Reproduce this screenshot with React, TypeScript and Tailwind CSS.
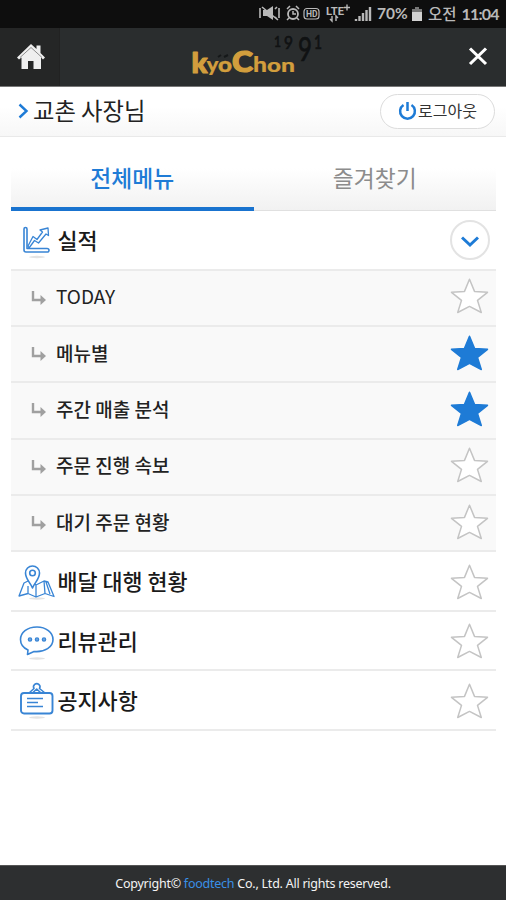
import type { ReactNode } from "react";
import clsx from "clsx";

const subMenus = [
  { label: "TODAY", starred: false },
  { label: "메뉴별", starred: true },
  { label: "주간 매출 분석", starred: true },
  { label: "주문 진행 속보", starred: false },
  { label: "대기 주문 현황", starred: false },
];

function Star({ filled = false, className }: { filled?: boolean; className?: string }) {
  return (
    <svg
      width="40"
      height="38"
      viewBox="0 0 40 38"
      className={clsx(
        "shrink-0",
        filled ? "fill-[#1e7bd6] stroke-[#1e7bd6]" : "fill-white stroke-[#c4c4c4]",
        className,
      )}
      strokeWidth="1.5"
      strokeLinejoin="round"
    >
      <path d="M19.5 2.2 24.5 14.4 37.5 15.3 27.5 23.4 31.3 35.5 19.5 29.4 7.7 35.5 11.5 23.4 1.5 15.3 14.5 14.4Z" />
    </svg>
  );
}

function StatusBar() {
  return (
    <div className="flex h-7 items-center bg-[#0e0e0e] pl-[258px] text-[#b9b9b9]">
      <svg width="115" height="24" viewBox="0 0 115 24" className="shrink-0 fill-none stroke-current">
        <path d="M5 8H9L15 4V18L9 14H5Z" className="fill-current" stroke="none" />
        <path d="M4 5 20 18M2 6V16M17 7 19 5M17 15 19 17M21 6V16" strokeWidth="1.6" />
        <circle cx="35" cy="12" r="5" strokeWidth="1.8" />
        <path d="M35 9V12H38M29 7 32 4M38 4 41 7M31 16 29 18M39 16 41 18" strokeWidth="1.5" />
        <rect x="46" y="6.5" width="15" height="10.5" rx="3" strokeWidth="1.2" />
        <text x="48" y="15" fontSize="8.5" fontWeight="700" textLength="11.5" lengthAdjust="spacingAndGlyphs" className="fill-current font-['Roboto']" stroke="none">HD</text>
        <text x="68" y="12.5" fontSize="11" fontWeight="700" textLength="18" lengthAdjust="spacingAndGlyphs" className="fill-current font-['Roboto']" stroke="none">LTE</text>
        <path d="M86 5.5H92M89 2.5V8.5M74 14V19L72 17M78 19V14L80 16" strokeWidth="1.4" />
        <path d="M98 19V17M101.5 19V14M105 19V11M108.5 19V8M112 19V5" strokeWidth="2.4" />
      </svg>
      <span className="ml-[4px] w-[32px] whitespace-nowrap font-['Lato'] text-[15.5px] font-bold leading-none">
        70%
      </span>
      <svg width="12" height="16" viewBox="0 0 12 16" className="ml-[2px] shrink-0">
        <path d="M4 1H8V3H11V15H1V3H4Z" fill="#777" />
        <path d="M1 6H11V15H1Z" fill="#d2d2d2" />
      </svg>
      <span className="ml-[5px] whitespace-nowrap font-['Noto_Sans_CJK_KR',sans-serif] text-[15.5px] font-medium leading-none">
        오전
      </span>
      <span className="ml-[5px] whitespace-nowrap font-['Lato'] text-[16px] font-bold leading-none tracking-[-0.8px]">
        11:04
      </span>
    </div>
  );
}

function Logo() {
  return (
    <svg width="140" height="58" viewBox="0 0 140 58" className="shrink-0 font-['Lato',sans-serif]">
      <g fill="#101213" stroke="#101213" strokeWidth="0.7">
        <text x="83" y="19" fontSize="15" textLength="7" lengthAdjust="spacingAndGlyphs">1</text>
        <text x="93" y="21" fontSize="17" textLength="9" lengthAdjust="spacingAndGlyphs">9</text>
        <text x="107" y="33" fontSize="32" textLength="14" lengthAdjust="spacingAndGlyphs">9</text>
        <text x="123" y="21" fontSize="19" textLength="8" lengthAdjust="spacingAndGlyphs">1</text>
      </g>
      <path d="M27 29 30 27M33 29 37 27" stroke="#151819" strokeWidth="2" />
      <g fill="#d29e3d" stroke="#d29e3d" strokeWidth="1.2" strokeLinejoin="round" fontWeight="900">
        <text x="0.5" y="45" fontSize="29" textLength="16" lengthAdjust="spacingAndGlyphs">k</text>
        <text x="15.5" y="43.5" fontSize="21" strokeWidth="0.2" textLength="12" lengthAdjust="spacingAndGlyphs">y</text>
        <text x="27" y="43.5" fontSize="20" strokeWidth="0.4" textLength="14" lengthAdjust="spacingAndGlyphs">o</text>
        <text x="41" y="43.5" fontSize="28" textLength="21" lengthAdjust="spacingAndGlyphs">C</text>
        <text x="62" y="44" fontSize="21" strokeWidth="0.2" textLength="14" lengthAdjust="spacingAndGlyphs">h</text>
        <text x="76" y="44" fontSize="18" strokeWidth="0.2" textLength="14" lengthAdjust="spacingAndGlyphs">o</text>
        <text x="90" y="44" fontSize="18" strokeWidth="0.2" textLength="14" lengthAdjust="spacingAndGlyphs">n</text>
      </g>
    </svg>
  );
}

function Header() {
  return (
    <header className="flex h-[59px] items-stretch border-b border-[#777] bg-[#2a2d2e]">
      <div className="flex w-[60px] items-center justify-center border-r border-[#222] bg-[#252626]">
        <svg width="30" height="28" viewBox="0 0 30 28" className="ml-0.5 fill-[#efefef]">
          <path d="M15 1 1 14.5 3 16.5 5.5 14.5V26H12V18H17.5V26H25V14.5L27 16.5 29 14.5 24.5 10V2.5H20.5V6Z" />
          <path d="M4 14.5 15 4.5 26 14.5" fill="none" stroke="#8d8d8d" strokeWidth="1" />
        </svg>
      </div>
      <div className="pl-[131px]">
        <Logo />
      </div>
      <svg width="20" height="20" viewBox="0 0 20 20" className="mt-[18px] mr-[18px] ml-auto">
        <path d="M2 2.5 18 18M18 2.5 2 18" stroke="#fff" strokeWidth="3.1" />
      </svg>
    </header>
  );
}

function UserBar() {
  return (
    <div className="flex h-[50px] items-center justify-between border-b border-[#e9e9e9] bg-linear-to-b from-white from-40% to-[#f7f7f7] pr-[11px] pl-[18px]">
      <div className="flex items-center">
        <svg width="11" height="16" viewBox="0 0 11 16">
          <path d="M1.5 1.5 8.5 8 1.5 14.5" fill="none" stroke="#1e7bd6" strokeWidth="2.4" />
        </svg>
        <span className="ml-1 whitespace-nowrap pb-0.5 text-[23.3px] leading-none text-[#222]">교촌 사장님</span>
      </div>
      <button className="flex h-[35px] w-[115px] items-center rounded-full border border-[#dcdcdc] bg-white pl-[17px]">
        <svg width="19" height="20" viewBox="0 0 19 20" fill="none" stroke="#1e7bd6" strokeWidth="2.5" className="mb-0.5">
          <path d="M5.5 4A7.4 7.4 0 1 0 13.5 4M9.5 1V10" />
        </svg>
        <span className="whitespace-nowrap pb-1 pl-px text-[16px] leading-none text-[#333]">로그아웃</span>
      </button>
    </div>
  );
}

function MenuRow({ icon, label, action, className }: { icon: ReactNode; label: string; action: ReactNode; className?: string }) {
  return (
    <div className={clsx("flex items-center border-b-2 border-[#ebebeb] pr-[6px] pl-[7px]", className)}>
      {icon}
      <span className="grow whitespace-nowrap pl-[2.5px] text-[21.8px] font-medium leading-none text-[#1a1a1a]">
        {label}
      </span>
      {action}
    </div>
  );
}

const iconProps = {
  width: 37,
  height: 38,
  viewBox: "0 0 37 38",
  fill: "none",
  stroke: "#3985d5",
  strokeWidth: 1.6,
  strokeLinejoin: "round" as const,
  className: "shrink-0",
};

function ChartIcon() {
  return (
    <svg {...iconProps}>
      <ellipse cx="19" cy="36" rx="8" ry="1.2" fill="#e3e3e3" stroke="none" />
      <path d="M6 8Q6 6.5 7.5 6.5T9 8V27.5H29Q31 27.5 31 29.3T29 31H8Q6 31 6 29Z" />
      <path d="M10 25 15 15.5 19 18.5 24.5 11 22 9 30 7 30.5 14.5 28 13 20.5 22 16.5 19.5 11 27Z" strokeWidth="1.3" />
    </svg>
  );
}

function MapIcon() {
  return (
    <svg {...iconProps}>
      <ellipse cx="19" cy="36.5" rx="8" ry="1.2" fill="#e3e3e3" stroke="none" />
      <path d="M10 19 6 21 1 34 10 31.5 18 35 27 31.5 36 34.5 30 20 26 19 18 23 15 21M10 31V24M18 35V23M26 19 27 31.5M28 20 32 32" strokeWidth="1.3" />
      <path d="M14.5 26C12 20 7.5 17 7.5 11A7 7 0 0 1 21.5 11C21.5 17 17 20 14.5 26Z" fill="#fff" />
      <circle cx="14.5" cy="11" r="2.8" />
    </svg>
  );
}

function ChatIcon() {
  return (
    <svg {...iconProps}>
      <ellipse cx="19" cy="36.5" rx="8" ry="1.2" fill="#e3e3e3" stroke="none" />
      <path d="M19 5C9 5 2.5 10.5 2.5 17.5 2.5 22 5.5 26 10 28L9.5 32.5 16 29.5C27 30.5 35 25 35 17.5 35 10.5 28 5 19 5Z" />
      <g strokeWidth="1.4" fill="#75aae2">
        <circle cx="12" cy="17.5" r="1.6" />
        <circle cx="19" cy="17.5" r="1.6" />
        <circle cx="26" cy="17.5" r="1.6" />
      </g>
    </svg>
  );
}

function NoticeIcon() {
  return (
    <svg {...iconProps}>
      <ellipse cx="19" cy="36.5" rx="8" ry="1.2" fill="#e3e3e3" stroke="none" />
      <rect x="3" y="12" width="31.5" height="20.5" rx="3" strokeWidth="1.9" />
      <path d="M11 12 16 7.5A3.2 3.2 0 1 1 21.5 7.5L27 12M14.5 12 18.7 8 23 12" />
      <path d="M9 17.5H25M9 21.5H20M9 25.5H25" />
    </svg>
  );
}

export default function App() {
  return (
    <div className="flex h-[900px] w-[506px] flex-col overflow-hidden bg-white font-['Noto_Sans_CJK_KR',sans-serif]">
      <StatusBar />
      <Header />
      <UserBar />
      <main className="mr-[10px] ml-[11px] grow pt-[13px]">
        <div className="grid h-[61px] grid-cols-2 bg-linear-to-b from-white from-30% to-[#f1f1f1] text-center text-[22.8px] leading-[56px]">
          <div className="border-b-4 border-[#1973cf] font-medium text-[#1e7bd6]">전체메뉴</div>
          <div className="border-b border-[#e0e0e0] text-[#8c8c8c]">즐겨찾기</div>
        </div>
        <MenuRow
          className="h-[59.5px]"
          icon={<ChartIcon />}
          label="실적"
          action={
            <div className="flex size-10 items-center justify-center rounded-full border-2 border-[#e3e3e3]">
              <svg width="18" height="12" viewBox="0 0 18 12" className="mt-1">
                <path d="M1 1.5 9 9 17 1.5" fill="none" stroke="#1e7bd6" strokeWidth="3" />
              </svg>
            </div>
          }
        />
        {subMenus.map((item) => (
          <div
            key={item.label}
            className="flex h-[56.4px] items-center border-b-2 border-[#ebebeb] bg-[#f9f9f9] pr-[6px] pl-[20px]"
          >
            <svg width="16" height="16" viewBox="0 0 16 16" className="shrink-0">
              <path d="M2 1V10H11" fill="none" stroke="#a0a0a0" strokeWidth="2.4" />
              <path d="M9.5 5 15 10 9.5 15Z" fill="#a0a0a0" />
            </svg>
            <span
              className={clsx(
                "grow whitespace-nowrap pl-[9px] leading-none text-[#222]",
                item.label === "TODAY" ? "pb-[4px] text-[19px]" : "pb-[4px] text-[19px] font-medium",
              )}
            >
              {item.label}
            </span>
            <Star filled={item.starred} className="mb-[3px]" />
          </div>
        ))}
        <MenuRow className="h-[59.5px]" icon={<MapIcon />} label="배달 대행 현황" action={<Star className="mt-px" />} />
        <MenuRow className="h-[59.5px]" icon={<ChatIcon />} label="리뷰관리" action={<Star className="mt-px" />} />
        <MenuRow className="h-[59.5px]" icon={<NoticeIcon />} label="공지사항" action={<Star className="mt-px" />} />
      </main>
      <footer className="flex h-[35px] items-center justify-center border-t border-[#555] bg-[#2d2f30] font-['Noto_Sans'] text-[12.5px] text-[#f4f4f4]">
        <span className="whitespace-nowrap pt-0.5 tracking-[-0.24px]">
          Copyright© <span className="text-[#3990e6]">foodtech</span> Co., Ltd. All rights reserved.
        </span>
      </footer>
    </div>
  );
}
